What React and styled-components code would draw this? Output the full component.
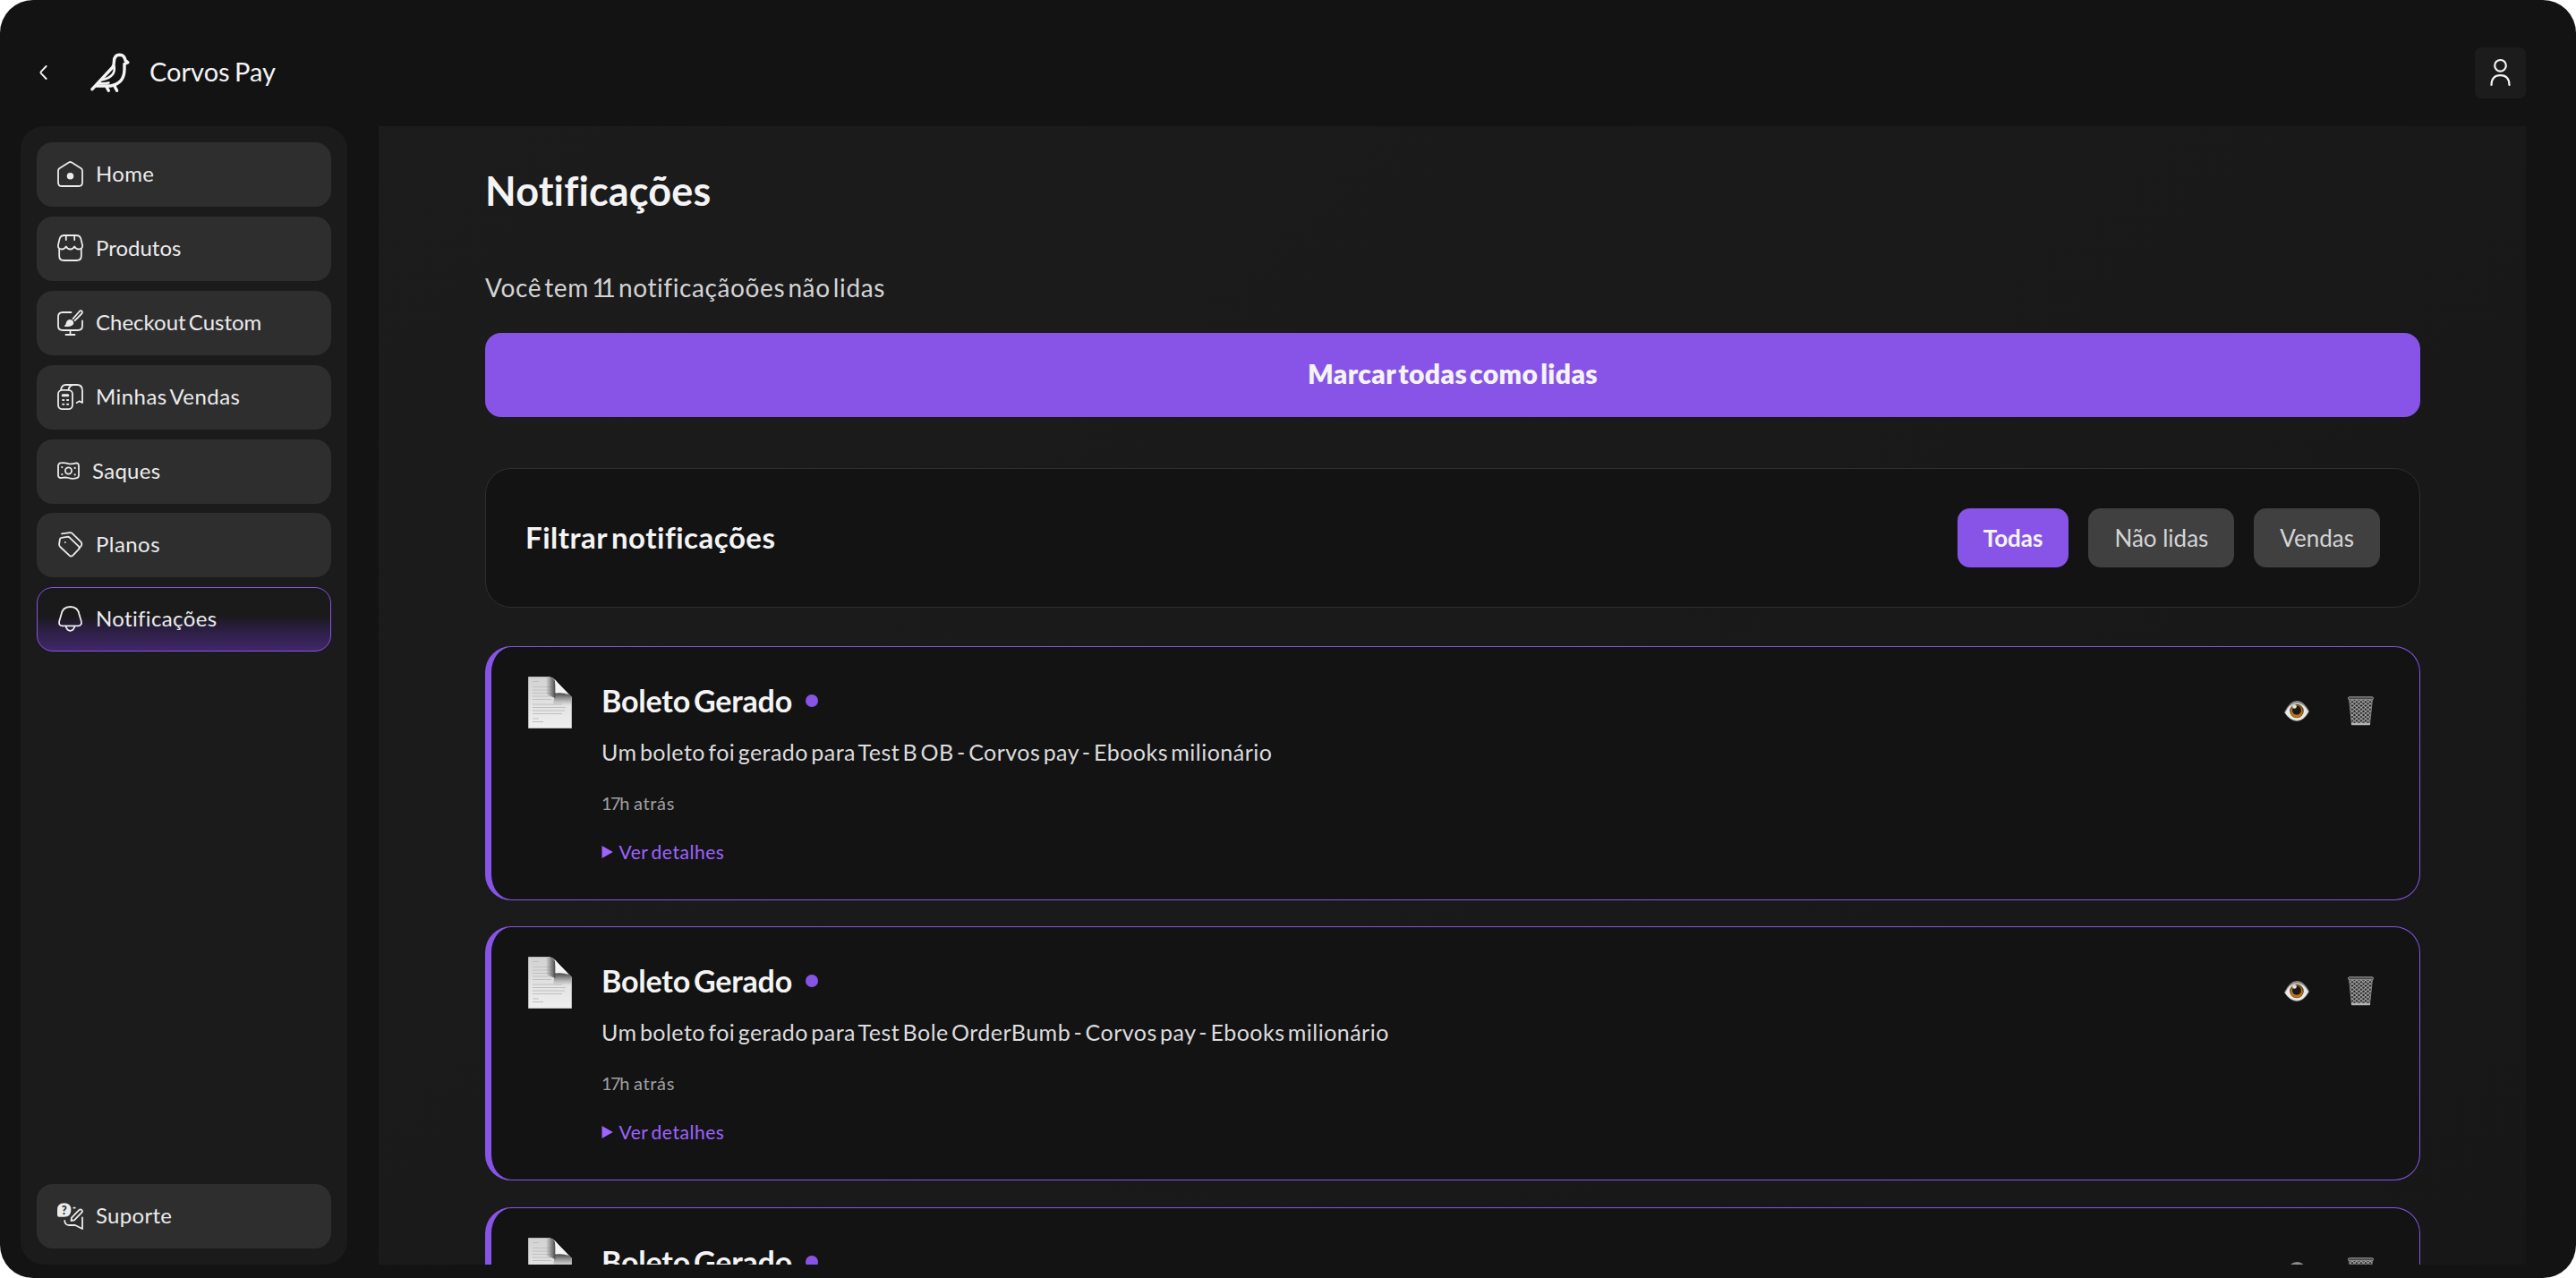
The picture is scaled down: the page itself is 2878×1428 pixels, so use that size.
import styled, { createGlobalStyle, css } from 'styled-components'

const GlobalStyle = createGlobalStyle`
  * {
    box-sizing: border-box;
  }

  body {
    margin: 0;
    background: #ffffff;
    font-family: Lato, 'Liberation Sans', sans-serif;
    font-variant-ligatures: none;
    color: #f4f4f5;
  }

  h1, h2, h3, p {
    margin: 0;
  }

  button {
    border: 0;
    font-family: inherit;
    color: inherit;
    cursor: pointer;
  }
`
const Window = styled.div`
  display: flex;
  flex-direction: column;
  height: 1428px;
  padding: 0 56px 15px 23px;
  border-radius: 37px;
  background: #131313;
  overflow: hidden;
`
const Header = styled.header`
  display: flex;
  align-items: center;
  flex: none;
  height: 140.5px;
  padding: 22px 0 0 21px;
`
const BackButton = styled.button`
  display: flex;
  margin-right: 48px;
  padding: 0;
  background: none;
`
const Brand = styled.span`
  margin-left: 21px;
  padding-bottom: 2px;
  font-size: 29px;
  line-height: 36px;
  word-spacing: -2px;
`
const UserButton = styled.button`
  display: flex;
  align-items: center;
  justify-content: center;
  width: 57px;
  height: 57px;
  margin-left: auto;
  padding: 0;
  border-radius: 7px;
  background: #1c1c1c;
`
const Body = styled.div`
  display: flex;
  flex: 1;
  gap: 35.5px;
  min-height: 0;
`
const Sidebar = styled.nav`
  display: flex;
  flex-direction: column;
  gap: 10.9px;
  flex: none;
  width: 364.5px;
  padding: 18.5px 18px 18px;
  border-radius: 26px;
  background: #1b1b1b;
`
const NavItem = styled.a`
  display: flex;
  align-items: center;
  gap: 14px;
  height: 72px;
  padding: 0 23px 1px;
  border-radius: 18px;
  background: #2e2e2e;
  color: #ebebec;

  &:last-child {
    margin-top: auto;
  }

  ${({ $active }) =>
    $active &&
    css`
      padding: 0 22px 1px;
      border: 1px solid #8953e6;
      background: linear-gradient(180deg, #191919 0%, #1a1a1b 45%, #2a1e3f 65%, #40276a 100%);
    `}
`
const NavLabel = styled.span`
  padding-bottom: 2px;
  font-size: 24px;
  letter-spacing: ${({ $tracking = 0.3 }) => $tracking}px;
  word-spacing: -3px;
`
const Content = styled.main`
  flex: 1;
  min-width: 0;
  padding: 45px 118px 0 119px;
  background: linear-gradient(135deg, #1c1c1c 0%, #171717 100%);
  overflow: hidden;
`
const Title = styled.h1`
  font-size: 45px;
  font-weight: 700;
  line-height: 54px;
  letter-spacing: 0.15px;
`
const Summary = styled.p`
  margin-top: 64.5px;
  font-size: 28px;
  line-height: 34px;
  letter-spacing: 0.6px;
  word-spacing: -4.5px;
  color: #d4d4d6;
`
const Digits = styled.span`
  margin-right: ${({ $after = 0 }) => $after}px;
  letter-spacing: ${({ $tight }) => $tight}px;
`
const MarkAllButton = styled.button`
  display: block;
  width: 100%;
  height: 94px;
  margin-top: 34px;
  padding: 0 0 4px;
  border-radius: 18px;
  background: #8854e8;
  font-size: 30px;
  font-weight: 800;
  letter-spacing: 0.4px;
  word-spacing: -4.5px;
`
const Filters = styled.section`
  display: flex;
  align-items: center;
  gap: 22px;
  height: 156px;
  margin-top: 57px;
  padding: 0 44px;
  border: 1px solid #2f2f2f;
  border-radius: 29px;
  background: #131313;
`
const FiltersTitle = styled.h2`
  margin-right: auto;
  padding-bottom: 2px;
  font-size: 33px;
  font-weight: 700;
  letter-spacing: 0.5px;
  word-spacing: -4px;
`
const FilterButton = styled.button`
  height: 66px;
  padding: 0 29px 1px;
  border-radius: 14px;
  background: ${({ $active }) => ($active ? '#8854e8' : '#404040')};
  font-size: 26px;
  font-weight: ${({ $active }) => ($active ? 700 : 400)};
  color: ${({ $active }) => ($active ? '#f4f4f5' : '#d4d4d6')};
`
const List = styled.div`
  display: flex;
  flex-direction: column;
  gap: 29.3px;
  margin-top: 43px;
`
const Card = styled.article`
  display: flex;
  align-items: flex-start;
  flex: none;
  height: 284px;
  padding: 33px 51px 0 41px;
  border: 1px solid #8854e8;
  border-left-width: 7px;
  border-radius: 29px;
  background: #131313;
`
const CardBody = styled.div`
  flex: 1;
  margin: 7px 0 0 33px;
`
const CardHeading = styled.div`
  display: flex;
  align-items: center;
  gap: 15px;
`
const CardTitle = styled.h3`
  font-size: 34px;
  font-weight: 700;
  line-height: 40px;
  letter-spacing: -0.2px;
  word-spacing: -4px;
`
const UnreadDot = styled.span`
  width: 14px;
  height: 14px;
  border-radius: 50%;
  background: #8854e8;
`
const Message = styled.p`
  margin-top: 22px;
  font-size: 25px;
  line-height: 30px;
  letter-spacing: 0.47px;
  word-spacing: -3.5px;
  color: #dcdcde;
`
const Time = styled.p`
  margin-top: 30px;
  font-size: 20px;
  line-height: 24px;
  letter-spacing: 0.7px;
  word-spacing: -2px;
  color: #a0a0a2;
`
const Details = styled.div`
  display: flex;
  align-items: center;
  gap: 6.5px;
  margin-top: 30px;
  font-size: 21px;
  line-height: 26px;
  letter-spacing: 0.55px;
  word-spacing: -2.5px;
  color: #9f63ff;
`
const Actions = styled.div`
  display: flex;
  align-items: center;
  gap: 43.5px;
  margin-top: 22px;
`
const ActionButton = styled.button`
  display: flex;
  padding: 0;
  background: none;
`
const Stroke = styled.svg`
  display: block;
  flex: none;
  fill: none;
  stroke: currentColor;
  stroke-width: ${({ $weight = 1.8 }) => $weight};
  stroke-linecap: round;
  stroke-linejoin: round;
`

const HomeIcon = () => (
  <Stroke width="29" height="29" viewBox="0 0 29 29">
    <path d="M12.9 1.5Q14.5 .5 16.1 1.5L26.4 8Q28 9.1 28 11V24Q28 28 24 28H5Q1 28 1 24V11Q1 9.1 2.6 8Z" />
    <circle cx="14.5" cy="16.7" r="2.9" fill="currentColor" />
  </Stroke>
)
const StoreIcon = () => (
  <Stroke width="29" height="30" viewBox="0 0 29 30">
    <path d="M8 1H21Q25.3 1 26.3 4.6L28 11.5V14Q27 16.5 24 16.5Q21 16.5 19.2 13.5Q17.5 16.5 14.5 16.5Q11.5 16.5 9.8 13.5Q8 16.5 5 16.5Q2 16.5 1 14V11.5L2.7 4.6Q3.7 1 8 1Z" />
    <path d="M2.2 16V24Q2.2 29 7.2 29H21.8Q26.8 29 26.8 24V16M9.8 1V6M19.2 1V6" />
  </Stroke>
)
const CheckoutIcon = () => (
  <Stroke width="29" height="29" viewBox="0 0 29 29">
    <path d="M15.5 3H6Q1 3 1 8V18Q1 23 6 23H23Q28 23 28 18V12.5M14.5 23V28M9.5 28H19.5" />
    <path d="M17.6 10.2L24.7 2Q26.2 .5 27.4 1.7Q28.6 2.9 27.2 4.5L19.7 12.2" />
    <path
      d="M9 18Q10.5 17.2 10.7 15Q11.7 12 14.3 12Q17.6 12.6 17.3 15.6Q16.4 18.6 9 18Z"
      fill="currentColor"
    />
  </Stroke>
)
const SalesIcon = () => (
  <Stroke width="29" height="29" viewBox="0 0 29 29">
    <rect x="1" y="6.8" width="16" height="21.3" rx="4.5" />
    <path d="M4 7Q4.8 1 9.5 1H22Q28 1 28 7.5V21L24.8 19.2L21.7 21M12.5 6.8Q13.5 1 18.5 1" />
    <path d="M6.2 12.7H11.8" strokeWidth="3" />
    <path d="M6.2 18H7.3M11 18H12.2M6.2 22.8H7.3M11 22.8H12.2" strokeWidth="2" />
  </Stroke>
)
const CashIcon = () => (
  <Stroke width="25" height="20" viewBox="0 0 25 20">
    <path d="M5 1.2Q8.5 1 12.5 2.2Q16.5 3 21 1.4Q24 1.2 24 5V15Q24 18 21 18.4Q16.5 19.4 12.5 18Q8.5 17 4.5 18Q1 18 1 15V5Q1 1.2 5 1.2Z" />
    <circle cx="12.5" cy="10" r="3.6" />
    <path d="M5.3 6V6.1M5.3 14V14.1M19.7 6.8V6.9M19.7 14.3V14.4" strokeWidth="2.2" />
  </Stroke>
)
const TagIcon = () => (
  <Stroke width="29" height="29" viewBox="0 0 29 29">
    <path d="M4.7 6.9L11 5.8Q12.7 5.6 14 6.9L23.8 16.4Q25.3 18.1 24 19.6L17.4 26.7Q15.5 28.4 13.5 26.7L3.2 17Q2 15.7 2.1 14L2.9 8.6Q3.1 7.1 4.7 6.9Z" />
    <path d="M5 2.4L14 1.1Q15.5 .9 16.8 2.1L26.3 11.4Q28.1 13.6 26.7 16L24.5 18.7M8.8 12V12.1" />
  </Stroke>
)
const BellIcon = () => (
  <Stroke width="29" height="29" viewBox="0 0 29 29">
    <path d="M14.5 1C8.5 1 5 5 4.2 10.6L2.2 17.3Q1.2 22.3 6 22.3H23Q27.8 22.3 26.8 17.3L24.8 10.6C24 5 20.5 1 14.5 1ZM9.5 22.5Q10.8 27.8 14.5 27.8Q18.2 27.8 19.5 22.5" />
  </Stroke>
)
const SupportIcon = () => (
  <Stroke width="29" height="30" viewBox="0 0 29 30">
    <path
      d="M0 8Q0 .3 7.7 .3Q15.4 .3 15.4 8Q15.4 15.7 7.7 15.7H2Q0 15.7 0 13.7Z"
      fill="currentColor"
      stroke="none"
    />
    <text x="7.7" y="12.8" fontSize="13" fontWeight="900" textAnchor="middle" fill="#2e2e2e" stroke="none">
      ?
    </text>
    <path d="M16 16.7L24 8.3Q25.8 6.6 27.3 8Q28.7 9.5 27 11.2L19 19.3L15.5 20ZM18.3 5.6H19.8M8.2 20Q8.7 25 13.5 25H20L28 29V16.5" />
  </Stroke>
)
const ChevronIcon = () => (
  <Stroke width="9" height="16" viewBox="0 0 9 16" $weight={1.9}>
    <path d="M7.6 1L2 6.8Q1 8 2 9.2L7.6 15" />
  </Stroke>
)
const CrowLogo = () => (
  <Stroke width="45" height="45" viewBox="0 0 45 45" $weight={3.4}>
    <path d="M2 40.7L24.5 16.5Q26.5 14 26.4 9.5Q26.8 2.2 32.6 2.2Q38 2.4 39 8.4L41.8 10.7L38 12.6V17.5Q38.4 34.3 22.5 37H5.5" />
    <path d="M26.5 14.5Q29 26.5 13.5 30.2M9.5 34Q16 34.6 20.5 33.6" strokeWidth="2.6" />
    <path d="M17.8 37.5L20.3 42.3M26.3 36L29.6 42.3" />
  </Stroke>
)
const UserIcon = () => (
  <Stroke width="24" height="32" viewBox="0 0 24 32" $weight={2.2}>
    <circle cx="11.5" cy="8.3" r="6.3" />
    <path d="M1.5 30Q1.5 19.2 11.5 19.2Q21.5 19.2 21.5 30" />
  </Stroke>
)
const DocumentIcon = () => (
  <svg width="49" height="58" viewBox="0 0 49 58">
    <defs>
      <linearGradient id="sheet" x1="0" y1="0" x2="0" y2="1">
        <stop offset="0" stopColor="#d2d2d2" />
        <stop offset="1" stopColor="#f0f0f0" />
      </linearGradient>
      <linearGradient id="curl" x1="0" y1="0" x2="1" y2="0">
        <stop offset="0" stopColor="#555" stopOpacity="0" />
        <stop offset="1" stopColor="#4a4a4a" />
      </linearGradient>
      <linearGradient id="shade" x1="0" y1="0" x2="0" y2="1">
        <stop offset="0" stopColor="#444" />
        <stop offset="1" stopColor="#777" stopOpacity="0" />
      </linearGradient>
    </defs>
    <path d="M.5 .5H24Q29 1.5 32 6L48.5 23V57.5H.5Z" fill="url(#sheet)" stroke="#b9b9b9" />
    <path
      d="M5 5.5H12M5 11.5H27M5 15H26M5 18.5H27M5 22H25M5 25.5H26M5 31H38M5 34.5H42M5 38H41M5 41.5H38M5 47H12M5 50.5H17"
      stroke="#c0c0c0"
    />
    <path d="M20 .5H24Q29 1.5 30.5 6V24L20 20Z" fill="url(#curl)" />
    <path d="M30 18H44L48.5 23V32H28Z" fill="url(#shade)" />
    <path d="M29.5 3Q32 5 34 8L45.5 20Q39 17.5 30.5 18.5Q31 9 29.5 3Z" fill="#f4f4f4" />
  </svg>
)
const EyeIcon = () => (
  <svg width="28" height="25" viewBox="0 0 28 25">
    <path d="M0 14Q6 1 14.5 1Q22 1 28 13Q22 24 14 24Q6 23.5 0 14Z" fill="#8c8c8c" />
    <path d="M1 14.5Q6 4 14.5 3.8Q22 4 27 13Q22 23 14 23Q6 22.5 1 14.5Z" fill="#e9e9e9" />
    <circle cx="14" cy="12.5" r="7.8" fill="#6b430e" />
    <circle cx="14" cy="13" r="6.7" fill="#b97817" />
    <circle cx="14" cy="11.8" r="5" fill="#191919" />
    <circle cx="11.5" cy="7.5" r="2.3" fill="#e4e4e4" />
  </svg>
)
const TrashIcon = () => (
  <svg width="29" height="33" viewBox="0 0 29 33">
    <defs>
      <pattern id="mesh" width="5" height="4.2" patternUnits="userSpaceOnUse">
        <path d="M0 0L5 4.2M5 0L0 4.2" stroke="#b0b0b0" strokeWidth=".9" />
      </pattern>
    </defs>
    <path d="M1.5 3H27.5L24.5 31.5H4.5Z" fill="#262626" />
    <path d="M1.5 3H27.5L24.5 31.5H4.5Z" fill="url(#mesh)" stroke="#808080" />
    <rect x=".5" y=".8" width="28" height="3" rx="1.3" fill="#4a4a4a" stroke="#9a9a9a" />
    <path d="M5 31H24" stroke="#b5b5b5" strokeWidth="2.4" strokeLinecap="round" />
  </svg>
)
const Triangle = () => (
  <svg width="13" height="14" viewBox="0 0 13 14">
    <path d="M.5 0L12.8 7L.5 14Z" fill="currentColor" />
  </svg>
)

const links = [
  { label: 'Home', Icon: HomeIcon },
  { label: 'Produtos', Icon: StoreIcon, tracking: 0 },
  { label: 'Checkout Custom', Icon: CheckoutIcon, tracking: 0 },
  { label: 'Minhas Vendas', Icon: SalesIcon, tracking: 0.45 },
  { label: 'Saques', Icon: CashIcon },
  { label: 'Planos', Icon: TagIcon, tracking: 0.45 },
  { label: 'Notificações', Icon: BellIcon, tracking: 0.35, active: true },
  { label: 'Suporte', Icon: SupportIcon }
]

const filters = ['Todas', 'Não lidas', 'Vendas']

const notifications = [
  { id: 1, message: 'Um boleto foi gerado para Test B OB - Corvos pay - Ebooks milionário' },
  { id: 2, message: 'Um boleto foi gerado para Test Bole OrderBumb - Corvos pay - Ebooks milionário' },
  { id: 3 }
]

const Notification = ({ message }) => (
  <Card>
    <DocumentIcon />
    <CardBody>
      <CardHeading>
        <CardTitle>Boleto Gerado</CardTitle>
        <UnreadDot />
      </CardHeading>
      {message && (
        <>
          <Message>{message}</Message>
          <Time>
            <Digits $tight={-1.5}>17</Digits>h atrás
          </Time>
          <Details>
            <Triangle />
            Ver detalhes
          </Details>
        </>
      )}
    </CardBody>
    <Actions>
      <ActionButton aria-label="Marcar como lida">
        <EyeIcon />
      </ActionButton>
      <ActionButton aria-label="Excluir">
        <TrashIcon />
      </ActionButton>
    </Actions>
  </Card>
)

const App = () => (
  <>
    <GlobalStyle />
    <Window>
      <Header>
        <BackButton aria-label="Voltar">
          <ChevronIcon />
        </BackButton>
        <CrowLogo />
        <Brand>Corvos Pay</Brand>
        <UserButton aria-label="Perfil">
          <UserIcon />
        </UserButton>
      </Header>
      <Body>
        <Sidebar>
          {links.map(({ label, Icon, tracking, active }) => (
            <NavItem key={label} $active={active}>
              <Icon />
              <NavLabel $tracking={tracking}>{label}</NavLabel>
            </NavItem>
          ))}
        </Sidebar>
        <Content>
          <Title>Notificações</Title>
          <Summary>
            Você tem{' '}
            <Digits $tight={-6} $after={6}>
              11
            </Digits>{' '}
            notificaçãoões não lidas
          </Summary>
          <MarkAllButton>Marcar todas como lidas</MarkAllButton>
          <Filters>
            <FiltersTitle>Filtrar notificações</FiltersTitle>
            {filters.map((name, idx) => (
              <FilterButton key={name} $active={idx === 0}>
                {name}
              </FilterButton>
            ))}
          </Filters>
          <List>
            {notifications.map(({ id, message }) => (
              <Notification key={id} message={message} />
            ))}
          </List>
        </Content>
      </Body>
    </Window>
  </>
)

export default App
